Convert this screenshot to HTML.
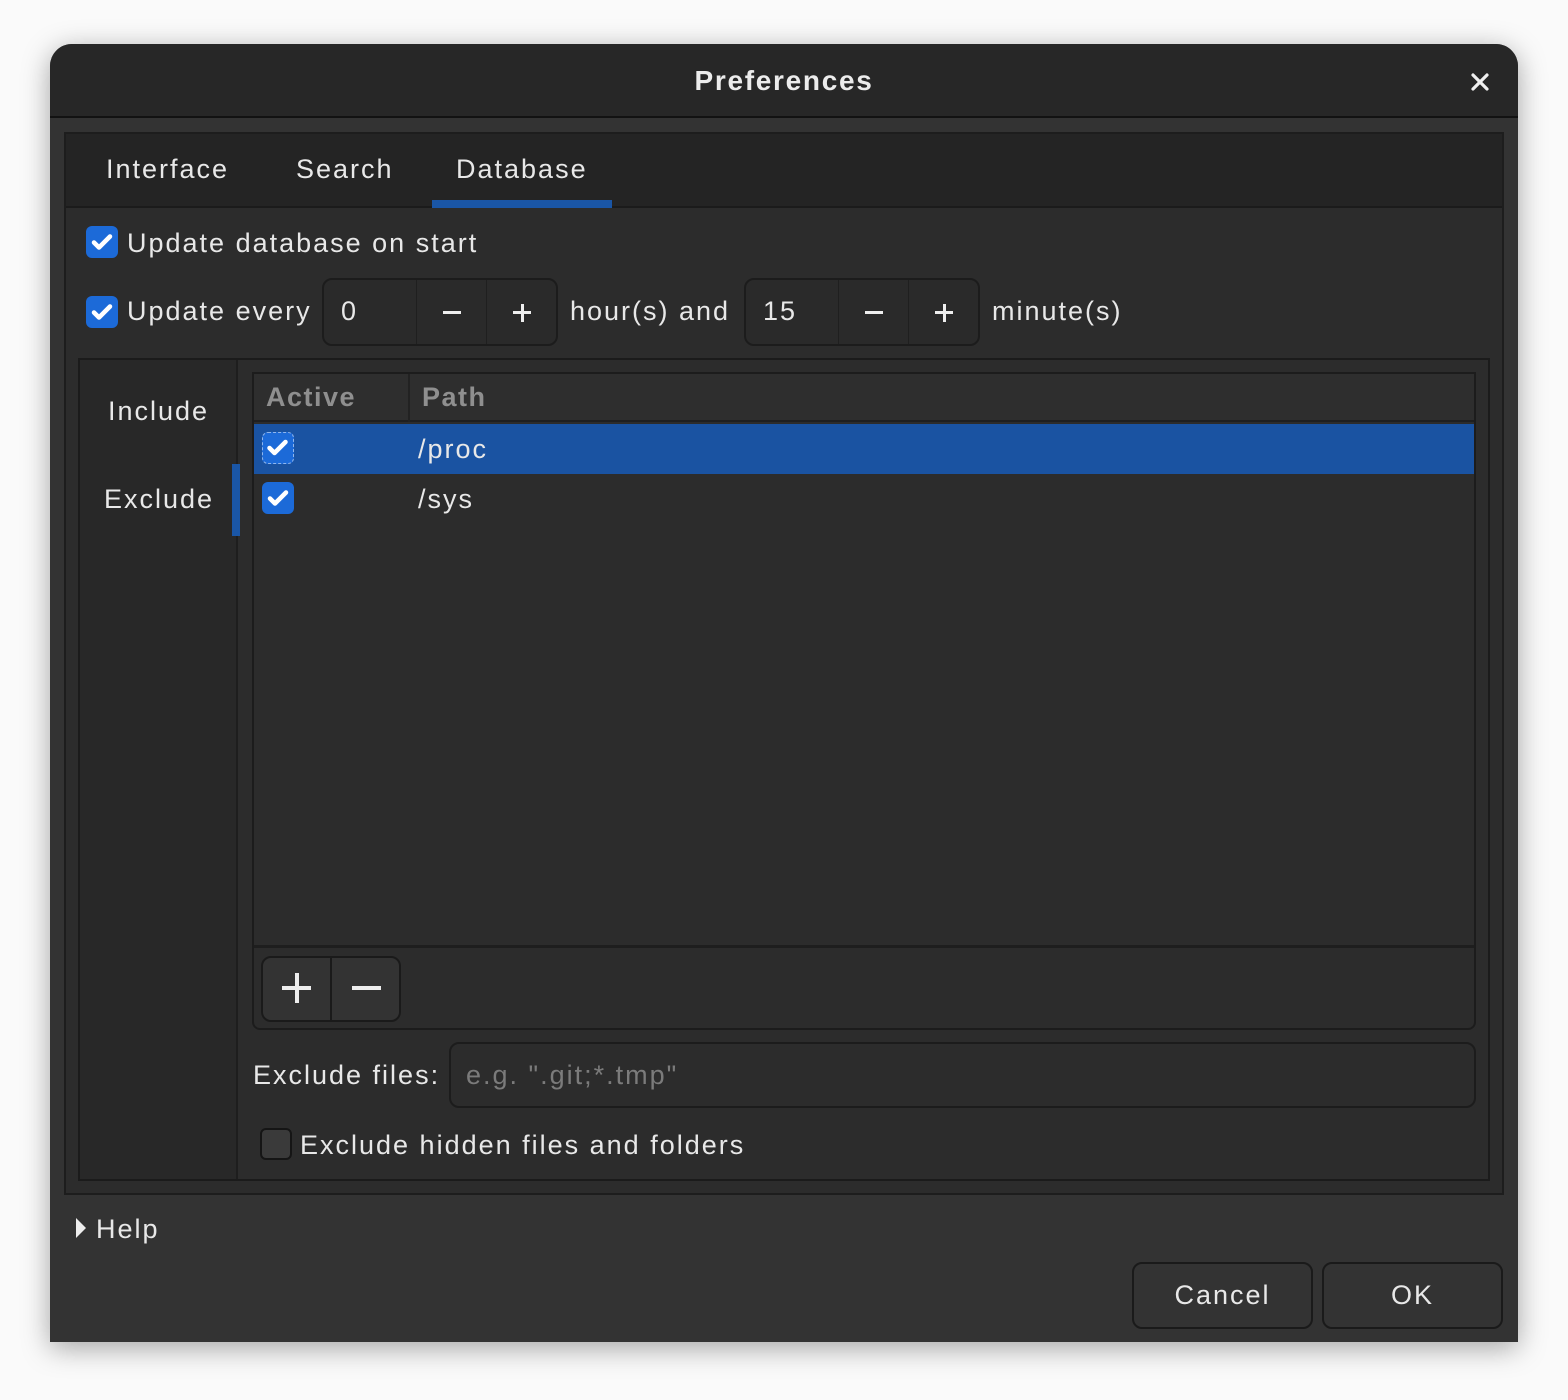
<!DOCTYPE html>
<html><head><meta charset="utf-8"><style>
*{box-sizing:border-box;margin:0;padding:0}
body{width:1568px;height:1400px;background:#fafafa;position:relative;overflow:hidden;font-family:"Liberation Sans",sans-serif;color:#e8e8e8;font-size:27px}
.a{position:absolute}
.win{left:50px;top:44px;width:1468px;height:1298px;background:#333;border-radius:22px 22px 0 0;box-shadow:0 6px 28px rgba(0,0,0,.35);overflow:hidden}
.t{white-space:nowrap;line-height:1;letter-spacing:2px}
.cb{width:32px;height:32px;border-radius:6px;background:#1c6ad8}
.spin{border:2px solid #1c1c1c;border-radius:10px;background:#2a2a2a;height:68px}
.btn{border:2px solid #1a1a1a;border-radius:10px;background:#333;}
</style></head><body>
<div class="a win">
  <div class="a" style="left:0;top:0;width:1468px;height:74px;background:#272727;border-bottom:2px solid #121212"></div>
  <div class="a t" style="left:0;width:1468px;text-align:center;top:23px;font-weight:bold;font-size:28px;color:#ececec;letter-spacing:1.7px">Preferences</div>
  <svg class="a" style="left:1420px;top:28px" width="20" height="20" viewBox="0 0 20 20"><path d="M3 3L17 17M17 3L3 17" stroke="#f0f0f0" stroke-width="3.2" stroke-linecap="round"/></svg>

  <div class="a" style="left:14px;top:88px;width:1440px;height:1063px;background:#2c2c2c;border:2px solid #1d1d1d"></div>
  <div class="a" style="left:16px;top:90px;width:1436px;height:74px;background:#242424;border-bottom:2px solid #1b1b1b"></div>
  <div class="a t" style="left:56px;top:112px">Interface</div>
  <div class="a t" style="left:246px;top:112px">Search</div>
  <div class="a t" style="left:406px;top:112px">Database</div>
  <div class="a" style="left:382px;top:156px;width:180px;height:8px;background:#1a56a6"></div>

  <div class="a cb" style="left:36px;top:182px"><svg width="32" height="32" viewBox="0 0 32 32"><path d="M8 16.5l5 5 11-11" stroke="#fff" stroke-width="4.5" fill="none" stroke-linecap="round" stroke-linejoin="round"/></svg></div>
  <div class="a t" style="left:77px;top:186px">Update database on start</div>
  <div class="a cb" style="left:36px;top:252px"><svg width="32" height="32" viewBox="0 0 32 32"><path d="M8 16.5l5 5 11-11" stroke="#fff" stroke-width="4.5" fill="none" stroke-linecap="round" stroke-linejoin="round"/></svg></div>
  <div class="a t" style="left:77px;top:254px">Update every</div>

  <div class="a spin" style="left:272px;top:234px;width:236px">
    <div class="a t" style="left:17px;top:18px">0</div>
    <div class="a" style="left:92px;top:0;width:1px;height:64px;background:#1f1f1f"></div>
    <div class="a" style="left:162px;top:0;width:1px;height:64px;background:#1f1f1f"></div>
    <div class="a" style="left:119px;top:31px;width:18px;height:3px;background:#eee"></div>
    <div class="a" style="left:189px;top:31px;width:18px;height:3px;background:#eee"></div>
    <div class="a" style="left:196.5px;top:24px;width:3px;height:18px;background:#eee"></div>
  </div>
  <div class="a t" style="left:520px;top:254px">hour(s) and</div>
  <div class="a spin" style="left:694px;top:234px;width:236px">
    <div class="a t" style="left:17px;top:18px">15</div>
    <div class="a" style="left:92px;top:0;width:1px;height:64px;background:#1f1f1f"></div>
    <div class="a" style="left:162px;top:0;width:1px;height:64px;background:#1f1f1f"></div>
    <div class="a" style="left:119px;top:31px;width:18px;height:3px;background:#eee"></div>
    <div class="a" style="left:189px;top:31px;width:18px;height:3px;background:#eee"></div>
    <div class="a" style="left:196.5px;top:24px;width:3px;height:18px;background:#eee"></div>
  </div>
  <div class="a t" style="left:942px;top:254px">minute(s)</div>

  <div class="a" style="left:28px;top:314px;width:1412px;height:823px;background:#2c2c2c;border:2px solid #1b1b1b"></div>
  <div class="a" style="left:30px;top:316px;width:158px;height:819px;background:#282828;border-right:2px solid #1e1e1e"></div>
  <div class="a t" style="left:58px;top:354px">Include</div>
  <div class="a t" style="left:54px;top:442px">Exclude</div>
  <div class="a" style="left:182px;top:420px;width:8px;height:72px;background:#1a56a6"></div>

  <div class="a" style="left:202px;top:328px;width:1224px;height:658px;border:2px solid #1c1c1c;border-radius:0 0 8px 8px;background:#2c2c2c"></div>
  <div class="a" style="left:204px;top:330px;width:1220px;height:48px;background:#2e2e2e;border-bottom:2px solid #1f1f1f"></div>
  <div class="a" style="left:358px;top:330px;width:2px;height:48px;background:#222"></div>
  <div class="a t" style="left:216px;top:340px;color:#8f8f8f;font-weight:bold;letter-spacing:1.5px">Active</div>
  <div class="a t" style="left:372px;top:340px;color:#8f8f8f;font-weight:bold;letter-spacing:1.5px">Path</div>
  <div class="a" style="left:204px;top:380px;width:1220px;height:50px;background:#1a53a2"></div>
  <div class="a cb" style="left:212px;top:388px;border:1.5px dashed #8fb6ee"><svg width="29" height="29" viewBox="0 0 29 29" style="margin:0"><path d="M6.5 15l5 5 11-11" stroke="#fff" stroke-width="4.5" fill="none" stroke-linecap="round" stroke-linejoin="round"/></svg></div>
  <div class="a t" style="left:368px;top:392px">/proc</div>
  <div class="a cb" style="left:212px;top:438px"><svg width="32" height="32" viewBox="0 0 32 32"><path d="M8 16.5l5 5 11-11" stroke="#fff" stroke-width="4.5" fill="none" stroke-linecap="round" stroke-linejoin="round"/></svg></div>
  <div class="a t" style="left:368px;top:442px">/sys</div>
  <div class="a" style="left:204px;top:901px;width:1220px;height:3px;background:#1e1e1e"></div>
  <div class="a btn" style="left:211px;top:912px;width:140px;height:66px"></div>
  <div class="a" style="left:280px;top:912px;width:2px;height:66px;background:#1a1a1a"></div>
  <div class="a" style="left:232px;top:942px;width:29px;height:4px;background:#eee"></div>
  <div class="a" style="left:244.5px;top:929px;width:4px;height:30px;background:#eee"></div>
  <div class="a" style="left:302px;top:942px;width:29px;height:4px;background:#eee"></div>

  <div class="a t" style="left:203px;top:1018px">Exclude files:</div>
  <div class="a" style="left:399px;top:998px;width:1027px;height:66px;border:2px solid #1c1c1c;border-radius:10px;background:#2c2c2c"></div>
  <div class="a t" style="left:416px;top:1018px;color:#7b7b7b">e.g. ".git;*.tmp"</div>
  <div class="a" style="left:210px;top:1084px;width:32px;height:32px;border:2px solid #151515;border-radius:6px;background:#3a3a3a"></div>
  <div class="a t" style="left:250px;top:1088px">Exclude hidden files and folders</div>

  <svg class="a" style="left:25px;top:1173px" width="12" height="22" viewBox="0 0 12 22"><path d="M1 1L11 11L1 21Z" fill="#eee"/></svg>
  <div class="a t" style="left:46px;top:1172px">Help</div>

  <div class="a btn" style="left:1082px;top:1218px;width:181px;height:67px"></div>
  <div class="a t" style="left:1082px;width:181px;text-align:center;top:1238px">Cancel</div>
  <div class="a btn" style="left:1272px;top:1218px;width:181px;height:67px"></div>
  <div class="a t" style="left:1272px;width:181px;text-align:center;top:1238px">OK</div>
</div>
</body></html>
